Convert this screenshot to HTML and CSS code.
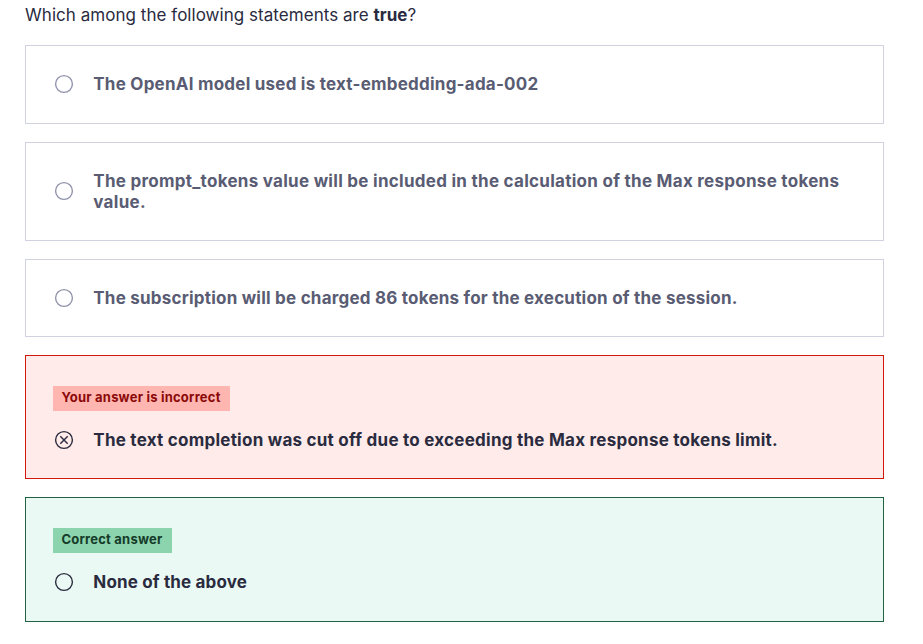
FILE: index.html
```html
<!DOCTYPE html>
<html lang="en">
<head>
<meta charset="utf-8">
<title>Question</title>
<link rel="stylesheet" href="styles.css">
</head>
<body>
<main class="quiz">
  <p class="question">Which among the following statements are <strong>true</strong>?</p>
  <div class="answer answer-one">
    <svg class="radio" viewBox="0 0 20 20"><circle cx="10" cy="10" r="8.4"/></svg>
    <p class="label l1">The OpenAI model used is text-embedding-ada-002</p>
  </div>
  <div class="answer answer-two">
    <svg class="radio" viewBox="0 0 20 20"><circle cx="10" cy="10" r="8.4"/></svg>
    <p class="label l2">The prompt_tokens value will be included in the calculation of the Max response tokens<br>value.</p>
  </div>
  <div class="answer answer-three">
    <svg class="radio" viewBox="0 0 20 20"><circle cx="10" cy="10" r="8.4"/></svg>
    <p class="label l3">The subscription will be charged 86 tokens for the execution of the session.</p>
  </div>
  <div class="result incorrect">
    <span class="badge">Your answer is incorrect</span>
    <div class="row">
      <svg class="radio" viewBox="0 0 20 20"><circle cx="10" cy="10" r="8.4"/><path d="M6.3 6.3l7.4 7.4m0-7.4l-7.4 7.4"/></svg>
      <p class="label l4">The text completion was cut off due to exceeding the Max response tokens limit.</p>
    </div>
  </div>
  <div class="result correct">
    <span class="badge">Correct answer</span>
    <div class="row">
      <svg class="radio" viewBox="0 0 20 20"><circle cx="10" cy="10" r="8.4"/></svg>
      <p class="label l5">None of the above</p>
    </div>
  </div>
</main>
</body>
</html>
```
FILE: styles.css
```css
* { box-sizing: border-box; }
body { margin: 0; background: #fff; color: #2a2b3f; font-family: Inter, "Liberation Sans", sans-serif; overflow: hidden; }
p { margin: 0; white-space: nowrap; }
.quiz { width: 884px; padding: 4px 0 0 25px; }
.question { height: 22px; margin-bottom: 19px; font-size: 17px; line-height: 22px; letter-spacing: 0.04px; }
.question strong { font-weight: 700; }
.answer { display: flex; align-items: center; gap: 19.3px; height: 79px; margin-bottom: 18px; padding-left: 28px; border: 1px solid #d1d2e0; color: #595c73; }
.answer-two { height: 99px; }
.answer-three { height: 78px; }
.radio { flex: none; width: 20px; height: 20px; fill: none; stroke: #9194ac; stroke-width: 1.4; }
.answer-one .radio, .answer-two .radio { margin-bottom: 1px; }
.label { font-size: 17px; font-weight: 700; line-height: 21px; }
.l1 { letter-spacing: 0.23px; }
.l2 { letter-spacing: 0.275px; }
.l3 { letter-spacing: 0.22px; }
.l4 { letter-spacing: 0.245px; }
.l5 { letter-spacing: 0.16px; }
.result { height: 124px; margin-bottom: 18px; padding: 30px 0 0 27px; border: 1px solid #d1180b; background: #ffebe9; }
.badge { display: block; width: 177px; height: 25px; padding-left: 8.5px; background: #ffb6b0; color: #8b0909; font-size: 13px; font-weight: 700; line-height: 23px; letter-spacing: 0.21px; white-space: nowrap; }
.row { display: flex; align-items: center; gap: 19.3px; height: 22px; margin-top: 18px; padding-left: 1px; }
.result .radio { stroke: #2a2b3f; }
.correct { height: 125px; border-color: #206241; background: #eaf9f4; }
.correct .badge { width: 119px; background: #8cd4ae; color: #153b29; }
```
